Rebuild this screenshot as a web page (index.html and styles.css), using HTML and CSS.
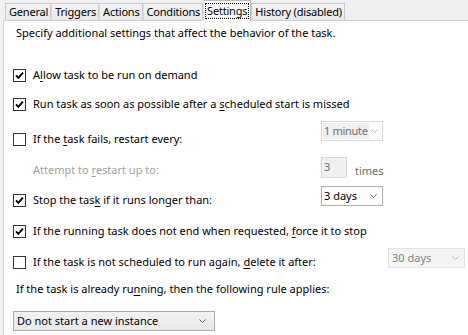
FILE: index.html
```html
<!DOCTYPE html>
<html>
<head>
<meta charset="utf-8">
<link rel="stylesheet" href="styles.css">
</head>
<body>
<div class="dialog">
  <div class="tabs">
    <div class="tab">General</div>
    <div class="tab">Triggers</div>
    <div class="tab">Actions</div>
    <div class="tab">Conditions</div>
    <div class="tab tab-active"><span class="focus">Settings</span></div>
    <div class="tab">History (disabled)</div>
  </div>
  <div class="panel">
    <p class="intro">Specify additional settings that affect the behavior of the task.</p>

    <div class="row row-1">
      <div class="opt">
        <span class="cb"><svg viewBox="0 0 11 11" width="11" height="11"><polyline points="2,5.3 4.3,7.8 9,2.6" /></svg></span>
        <span class="label">A<u>l</u>low task to be run on demand</span>
      </div>
    </div>

    <div class="row row-2">
      <div class="opt">
        <span class="cb"><svg viewBox="0 0 11 11" width="11" height="11"><polyline points="2,5.3 4.3,7.8 9,2.6" /></svg></span>
        <span class="label">Run task as soon as possible after a <u>s</u>cheduled start is missed</span>
      </div>
    </div>

    <div class="row row-3 row-ctrl">
      <div class="opt opt-w1 opt-down10">
        <span class="cb"></span>
        <span class="label">If the <u>t</u>ask fails, restart every:</span>
      </div>
      <div class="combo combo-dis combo-min">
        <span class="combo-sel">1 minute</span>
        <svg class="chev" viewBox="0 0 7 4" width="7" height="4"><polyline points="0.5,0.5 3.5,3.5 6.5,0.5" /></svg>
      </div>
    </div>

    <div class="row row-4 row-ctrl">
      <div class="attempt opt-w1">
        <span class="label label-dis">Attempt to <u>r</u>estart up to:</span>
      </div>
      <div class="field-dis">3</div>
      <span class="times">times</span>
    </div>

    <div class="row row-5 row-ctrl">
      <div class="opt opt-w1 opt-down6">
        <span class="cb"><svg viewBox="0 0 11 11" width="11" height="11"><polyline points="2,5.3 4.3,7.8 9,2.6" /></svg></span>
        <span class="label">Stop the tas<u>k</u> if it runs longer than:</span>
      </div>
      <div class="combo combo-white combo-min">
        <span>3 days</span>
        <svg class="chev" viewBox="0 0 7 4" width="7" height="4"><polyline points="0.5,0.5 3.5,3.5 6.5,0.5" /></svg>
      </div>
    </div>

    <div class="row row-6">
      <div class="opt">
        <span class="cb"><svg viewBox="0 0 11 11" width="11" height="11"><polyline points="2,5.3 4.3,7.8 9,2.6" /></svg></span>
        <span class="label">If the running task does not end when requested, <u>f</u>orce it to stop</span>
      </div>
    </div>

    <div class="row row-7 row-ctrl">
      <div class="opt opt-w2 opt-down5">
        <span class="cb"></span>
        <span class="label">If the task is not scheduled to run again, <u>d</u>elete it after:</span>
      </div>
      <div class="combo combo-dis2 combo-days">
        <span>30 days</span>
        <svg class="chev" viewBox="0 0 7 4" width="7" height="4"><polyline points="0.5,0.5 3.5,3.5 6.5,0.5" /></svg>
      </div>
    </div>

    <p class="rule">If the task is already ru<u>n</u>ning, then the following rule applies:</p>

    <div class="combo combo-gray combo-wide">
      <span>Do not start a new instance</span>
      <svg class="chev" viewBox="0 0 7 4" width="7" height="4"><polyline points="0.5,0.5 3.5,3.5 6.5,0.5" /></svg>
    </div>
  </div>
</div>
</body>
</html>
```

FILE: styles.css
```css
html, body {
  margin: 0;
  padding: 0;
}

body {
  width: 468px;
  height: 335px;
  overflow: hidden;
  background: #f0f0f0;
  font-family: "Noto Sans", "Open Sans", sans-serif;
  font-size: 11px;
  line-height: 16px;
  color: #000;
}

.dialog {
  display: flex;
  flex-direction: column;
  height: 335px;
}

/* ---------- tabs ---------- */
.tabs {
  display: flex;
  align-items: flex-end;
  height: 20px;
  padding-left: 5px;
}

.tab {
  box-sizing: border-box;
  height: 17px;
  padding: 0 2px 0 3px;
  border: 1px solid #c9c9c9;
  border-bottom: none;
  background: linear-gradient(#f3f3f3, #e9e9e9);
  line-height: 15px;
  letter-spacing: -0.2px;
  white-space: nowrap;
}

.tab + .tab {
  border-left-color: #dcdcdc;
}

.tab-active {
  position: relative;
  z-index: 1;
  height: 21px;
  margin-bottom: -1px;
  padding: 2px 2px 0;
  background: #fff;
  border-color: #b9b9b9;
  line-height: 15px;
}

.tab-active + .tab {
  border-left-color: #c9c9c9;
}

.focus {
  display: inline-block;
  padding: 0 1px;
  outline: 1px dotted #000;
  outline-offset: 0;
  line-height: 14px;
}

/* ---------- panel ---------- */
.panel {
  flex: 1;
  margin-left: 3px;
  border-top: 1px solid #d0d0d0;
  border-left: 1px solid #d0d0d0;
  background: #fff;
  padding: 4px 0 0 9px;
}

.intro,
.rule {
  margin: 0 0 0 3px;
  white-space: nowrap;
}

.row {
  display: flex;
  align-items: center;
}

.row-ctrl {
  align-items: flex-start;
}

.opt {
  display: flex;
  align-items: center;
  gap: 7px;
  height: 16px;
  white-space: nowrap;
}

.opt-w1 { width: 308px; flex: none; }
.opt-w2 { width: 375px; flex: none; }
.opt-down10 { margin-top: 10px; }
.opt-down6 { margin-top: 6px; }
.opt-down5 { margin-top: 5px; }

.row-1 { margin-top: 26px; }
.row-2 { margin-top: 13px; }
.row-3 { margin-top: 9px; }
.row-4 { margin-top: 10px; }
.row-5 { margin-top: 7px; }
.row-6 { margin-top: 15px; }
.row-7 { margin-top: 10px; }
.rule { margin-top: 11px; }

.cb {
  box-sizing: border-box;
  flex: none;
  width: 13px;
  height: 13px;
  border: 1px solid #333;
  background: #fff;
  display: flex;
  align-items: center;
  justify-content: center;
}

.cb svg polyline {
  fill: none;
  stroke: #000;
  stroke-width: 1.9;
}

.label u,
.intro u,
.rule u {
  text-decoration-thickness: 1px;
  text-underline-offset: 2px;
}

.attempt {
  box-sizing: border-box;
  padding-left: 20px;
  margin-top: 5px;
  white-space: nowrap;
}

.label-dis {
  color: #a0a0a0;
}

.field-dis {
  box-sizing: border-box;
  width: 26px;
  height: 21px;
  border: 1px solid #d9d9d9;
  background: #f0f0f0;
  color: #6d6d6d;
  padding: 1px 0 0 2px;
  line-height: 16px;
}

.times {
  margin: 6px 0 0 8px;
  color: #6d6d6d;
}

/* ---------- combos ---------- */
.combo {
  box-sizing: border-box;
  flex: none;
  height: 20px;
  display: flex;
  align-items: center;
  justify-content: space-between;
  padding: 0 5px 0 2px;
  border: 1px solid #acacac;
  white-space: nowrap;
  overflow: hidden;
}

.chev {
  flex: none;
}

.chev polyline {
  fill: none;
  stroke: #606060;
  stroke-width: 1;
}

.combo-min { width: 62px; }

.combo-white {
  background: #fff;
  border-color: #adadad;
}

.combo-dis {
  border-color: #d9d9d9;
  background: #fff;
  color: #6d6d6d;
  padding-left: 1px;
  padding-right: 4px;
}

.combo-sel {
  background: #f0f0f0;
  padding: 0 1px;
  line-height: 16px;
  letter-spacing: -0.3px;
}

.combo-dis .chev polyline,
.combo-dis2 .chev polyline {
  stroke: #b5b5b5;
}

.combo-days {
  width: 77px;
  margin-top: -1px;
  padding-left: 3px;
  border-color: #e3e3e3;
  background: #f4f4f4;
  color: #838383;
}

.combo-wide {
  width: 202px;
  margin-top: 14px;
  padding-left: 3px;
  padding-right: 8px;
  background: linear-gradient(#f2f2f2, #e8e8e8);
}
```
